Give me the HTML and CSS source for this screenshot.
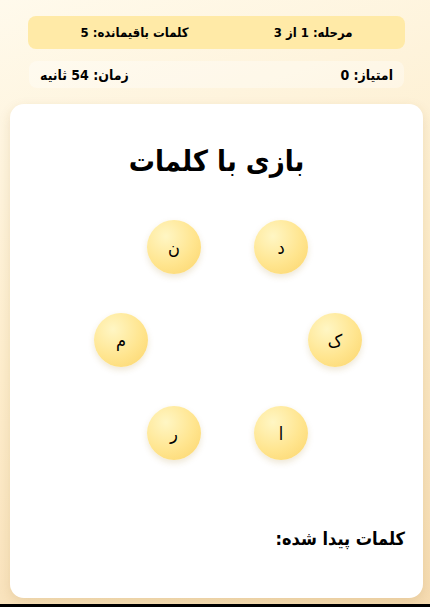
FILE: index.html
```html
<!DOCTYPE html>
<html lang="fa" dir="rtl">
<head>
<meta charset="utf-8">
<title>بازی با کلمات</title>
<link rel="stylesheet" href="styles.css">
</head>
<body>
<div class="page">
  <div class="stats">
    <span>مرحله: 1 از 3</span>
    <span>کلمات باقیمانده: 5</span>
  </div>
  <div class="stats2">
    <span>امتیاز: 0</span>
    <span>زمان: 54 ثانیه</span>
  </div>
  <div class="card">
    <h1 class="title">بازی با کلمات</h1>
    <div class="wheel">
      <div class="letter l1">د</div>
      <div class="letter l2">ن</div>
      <div class="letter l3">م</div>
      <div class="letter l4">ک</div>
      <div class="letter l5">ا</div>
      <div class="letter l6">ر</div>
    </div>
    <h2 class="found">کلمات پیدا شده:</h2>
  </div>
</div>
</body>
</html>
```
FILE: styles.css
```css
html {
  background: #000;
}
body {
  margin: 0;
  font-family: "DejaVu Sans Condensed", "DejaVu Sans", sans-serif;
  color: #000;
}
.page {
  height: 604px;
  box-sizing: border-box;
  padding-top: 16px;
  overflow: hidden;
  background: linear-gradient(160deg, #fffaec 0%, #fdedcc 50%, #f6dcb2 100%);
}
.stats {
  margin: 0 25px 0 28px;
  height: 33px;
  padding: 0 10px;
  display: flex;
  justify-content: space-around;
  align-items: center;
  background: #ffeaa7;
  border-radius: 8px;
  font-size: 13px;
  font-weight: bold;
}
.stats2 {
  margin: 12px 26px 0 29px;
  height: 27px;
  padding: 0 11px;
  display: flex;
  justify-content: space-between;
  align-items: center;
  background: rgba(255, 255, 255, 0.35);
  border-radius: 8px;
  font-size: 14px;
  font-weight: bold;
}
.card {
  margin: 16px 7px 0 10px;
  height: 494px;
  box-sizing: border-box;
  padding: 20px 18px 0;
  background: #fff;
  border-radius: 14px;
  box-shadow: 0 4px 12px rgba(150, 100, 30, 0.15);
}
.title {
  margin: 18px 0 0;
  font-size: 29px;
  line-height: 39px;
  text-align: center;
  font-weight: bold;
}
.wheel {
  position: relative;
  width: 270px;
  height: 250px;
  margin: 34px 42px 0 0;
}
.letter {
  position: absolute;
  width: 54px;
  height: 54px;
  border-radius: 50%;
  display: flex;
  align-items: center;
  justify-content: center;
  font-size: 18px;
  background: radial-gradient(circle at 35% 30%, #fff6c4 0%, #ffe58f 55%, #fbd46a 100%);
  box-shadow: 0 3px 6px rgba(160, 120, 30, 0.18);
}
.l1 { left: 161px; top: 5px; }
.l2 { left: 54px; top: 5px; }
.l3 { left: 1px; top: 98px; }
.l4 { left: 215px; top: 98px; }
.l5 { left: 161px; top: 191px; }
.l6 { left: 54px; top: 191px; }
.found {
  margin: 62px 0 0;
  font-size: 18px;
  line-height: 24px;
  font-weight: bold;
  text-align: right;
}
```
